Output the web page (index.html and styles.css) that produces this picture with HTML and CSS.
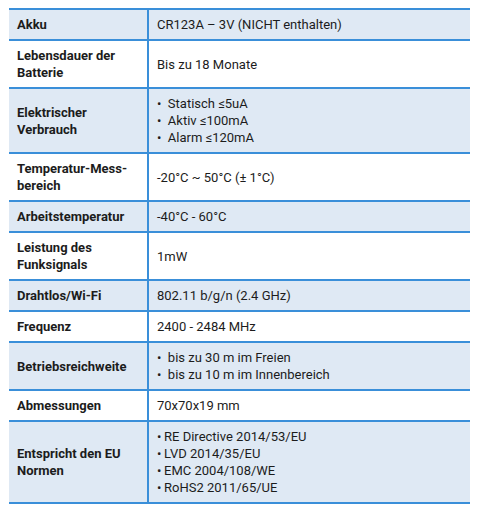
FILE: index.html
```html
<!DOCTYPE html>
<html lang="de">
<head>
<meta charset="utf-8">
<link rel="stylesheet" href="styles.css">
</head>
<body>
<table class="spec">
  <tr class="alt"><th>Akku</th><td>CR123A – 3V (NICHT enthalten)</td></tr>
  <tr><th>Lebensdauer der Batterie</th><td>Bis zu 18 Monate</td></tr>
  <tr class="alt"><th>Elektrischer Verbrauch</th><td>
    <div class="li">•&nbsp; Statisch ≤5uA</div>
    <div class="li">•&nbsp; Aktiv ≤100mA</div>
    <div class="li">•&nbsp; Alarm ≤120mA</div>
  </td></tr>
  <tr><th>Temperatur-Mess-bereich</th><td>-20°C ~ 50°C (± 1°C)</td></tr>
  <tr class="alt"><th>Arbeitstemperatur</th><td>-40°C - 60°C</td></tr>
  <tr><th>Leistung des Funksignals</th><td>1mW</td></tr>
  <tr class="alt"><th>Drahtlos/Wi-Fi</th><td>802.11 b/g/n (2.4 GHz)</td></tr>
  <tr><th>Frequenz</th><td>2400 - 2484 MHz</td></tr>
  <tr class="alt"><th>Betriebsreichweite</th><td>
    <div class="li">•&nbsp; bis zu 30 m im Freien</div>
    <div class="li">•&nbsp; bis zu 10 m im Innenbereich</div>
  </td></tr>
  <tr><th>Abmessungen</th><td>70x70x19 mm</td></tr>
  <tr class="alt"><th>Entspricht den EU Normen</th><td>
    <div class="li">•&thinsp;RE Directive 2014/53/EU</div>
    <div class="li">•&thinsp;LVD 2014/35/EU</div>
    <div class="li">•&thinsp;EMC 2004/108/WE</div>
    <div class="li">•&thinsp;RoHS2 2011/65/UE</div>
  </td></tr>
</table>
</body>
</html>
```
FILE: styles.css
```css
html, body {
  margin: 0;
  padding: 0;
  background: #ffffff;
}
body {
  padding: 8px 9px 0 9px;
  font-family: Roboto, "Liberation Sans", sans-serif;
  font-size: 13px;
  color: #1c1c1c;
}
.spec {
  width: 461px;
  border-collapse: collapse;
  border-spacing: 0;
}
.spec th,
.spec td {
  border-top: 2px solid #3a8fd9;
  border-bottom: 2px solid #3a8fd9;
  padding: 6px 8px;
  line-height: 17px;
  text-align: left;
  vertical-align: middle;
}
.spec th {
  width: 122px;
  font-weight: 700;
  border-right: 2px solid #3a8fd9;
}
.spec td {
  font-weight: 400;
}
.spec tr.alt th,
.spec tr.alt td {
  background: #dfe9f4;
}
.li {
  white-space: nowrap;
}
```
